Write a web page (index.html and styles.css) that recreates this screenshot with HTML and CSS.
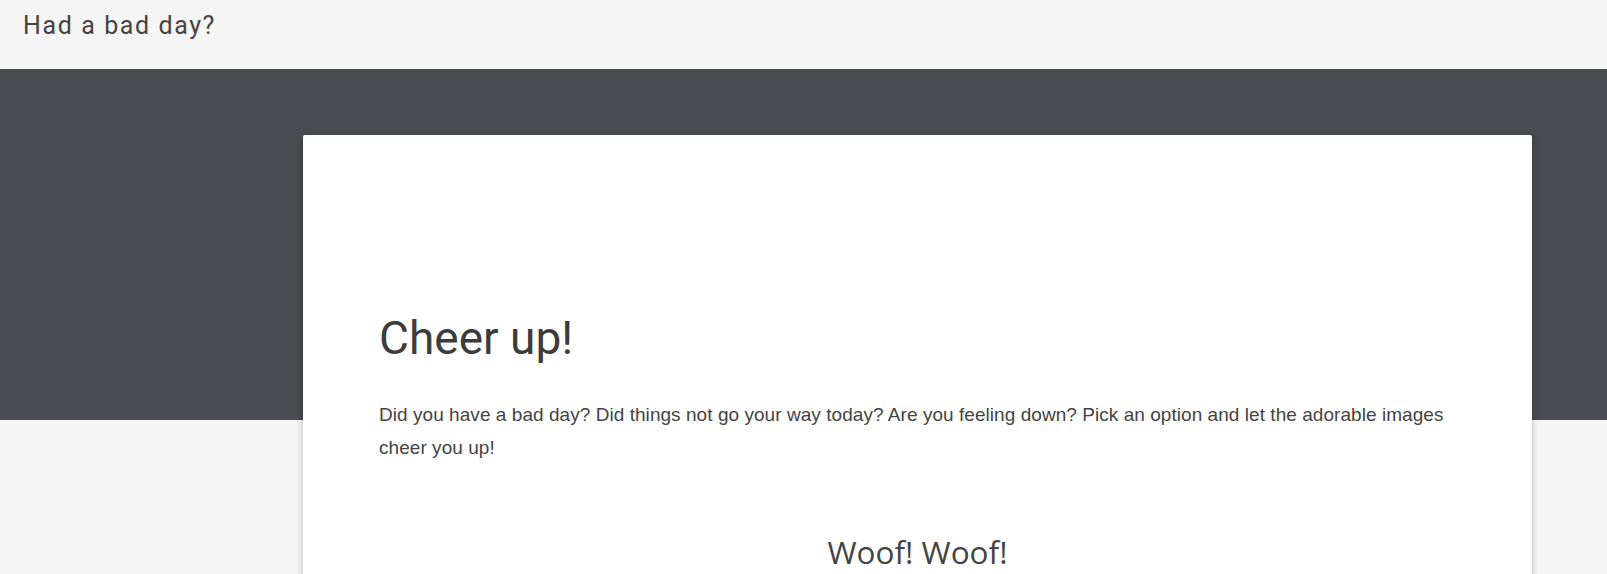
FILE: index.html
```html
<!DOCTYPE html>
<html lang="en">
<head>
<meta charset="utf-8">
<title>Had a bad day?</title>
<link rel="stylesheet" href="styles.css">
</head>
<body>
<header class="topbar">
  <span class="topbar-title">Had a bad day?</span>
</header>
<main class="stage">
  <section class="card">
    <h1 class="card-title">Cheer up!</h1>
    <p class="card-text">Did you have a bad day? Did things not go your way today? Are you feeling down? Pick an option and let the adorable images cheer you up!</p>
    <h2 class="card-sub">Woof! Woof!</h2>
  </section>
</main>
</body>
</html>
```
FILE: styles.css
```css
html, body {
  margin: 0;
  padding: 0;
}
body {
  background: #f5f5f5;
  color: #444;
  font-family: "Roboto", "Liberation Sans", sans-serif;
  height: 574px;
  overflow: hidden;
}
.topbar {
  height: 69px;
  display: flex;
  align-items: flex-start;
  padding-left: 23px;
  box-sizing: border-box;
  background: #f5f5f5;
}
.topbar-title {
  font-family: "Roboto", sans-serif;
  font-size: 25px;
  letter-spacing: 1.6px;
  line-height: 28px;
  margin-top: 12px;
  color: #444;
}
.stage {
  background: linear-gradient(#4a4b50 0, #4a4b50 351px, #f5f5f5 351px);
  padding: 66px 75px 0 303px;
}
.card {
  background: #fff;
  border-radius: 2px;
  box-shadow: 0 2px 6px rgba(0,0,0,0.25);
  padding: 176px 76px 40px 76px;
  min-height: 600px;
}
.card-title {
  margin: 0;
  font-family: "Roboto", sans-serif;
  font-weight: 400;
  font-size: 46px;
  line-height: 54px;
  color: #3c3c3c;
}
.card-text {
  margin: 33px 0 0 0;
  font-family: "Liberation Sans", Arial, sans-serif;
  font-size: 19px;
  letter-spacing: 0.05px;
  line-height: 33px;
  color: #444;
}
.card-sub {
  margin: 66px 0 0 0;
  text-align: center;
  font-family: "Open Sans", sans-serif;
  font-weight: 400;
  font-size: 31.5px;
  line-height: 44px;
  color: #444;
}
```
